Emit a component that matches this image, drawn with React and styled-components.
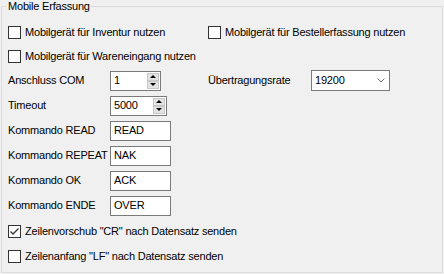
import styled, { createGlobalStyle } from "styled-components";

const GlobalStyle = createGlobalStyle`
  html, body {
    margin: 0;
    padding: 0;
    background: #f0f0f0;
  }
  body {
    width: 444px;
    height: 274px;
    overflow: hidden;
    font-family: "Liberation Sans", Arial, sans-serif;
    font-size: 11px;
    letter-spacing: -0.2px;
    color: #000;
  }
`;

const GroupBox = styled.fieldset`
  box-sizing: border-box;
  width: 442px;
  height: 273px;
  margin: 0 0 0 1px;
  padding: 7px 6px 0 6px;
  border: 1px solid #dcdcdc;
  min-inline-size: 0;
`;

const Legend = styled.legend`
  padding: 0 1px;
  margin-left: -1px;
  line-height: 13px;
  height: 13px;
`;

const Row = styled.div`
  display: flex;
  align-items: center;
  height: ${(p) => p.$h || 25}px;
  margin-top: ${(p) => p.$mt || 0}px;
`;

const Cell = styled.div`
  display: flex;
  align-items: center;
  width: ${(p) => (p.$w ? `${p.$w}px` : "auto")};
  flex: none;
`;

const Label = styled.span`
  width: ${(p) => p.$w || 102}px;
  flex: none;
  white-space: nowrap;
  line-height: 13px;
`;

const CheckWrap = styled.label`
  display: flex;
  align-items: center;
  gap: 4px;
  white-space: nowrap;
  line-height: 13px;
`;

const Box = styled.span`
  box-sizing: border-box;
  width: 13px;
  height: 13px;
  border: 1px solid #333;
  background: #fff;
  display: flex;
  align-items: center;
  justify-content: center;
  flex: none;
`;

const Input = styled.div`
  box-sizing: border-box;
  width: ${(p) => p.$w}px;
  height: 20px;
  border: 1px solid #7a7a7a;
  background: #fff;
  display: flex;
  align-items: center;
  padding-left: 3px;
  line-height: 13px;
`;

const InputText = styled.span`
  flex: 1;
`;

const Spinner = styled.div`
  display: flex;
  flex-direction: column;
  width: 12px;
  height: 16px;
  margin-right: 1px;
`;

const SpinButton = styled.div`
  flex: 1;
  background: #e3e3e3;
  border: 1px solid #c8c8c8;
  box-sizing: border-box;
  display: flex;
  align-items: center;
  justify-content: center;
`;

const Arrow = styled.span`
  width: 0;
  height: 0;
  border-left: 3px solid transparent;
  border-right: 3px solid transparent;
  ${(p) =>
    p.$down ? "border-top: 3px solid #000;" : "border-bottom: 3px solid #000;"}
`;

const Combo = styled.div`
  box-sizing: border-box;
  width: 79px;
  height: 21px;
  border: 1px solid #7a7a7a;
  background: #fff;
  display: flex;
  align-items: center;
  justify-content: space-between;
  padding: 0 4px 0 3px;
  margin-left: 2px;
  line-height: 13px;
`;

const Check = ({ checked, children }) => (
  <CheckWrap>
    <Box>
      {checked && (
        <svg width="11" height="11" viewBox="0 0 11 11">
          <path d="M1.5 5.5 L4 8 L9.5 2.5" fill="none" stroke="#333" strokeWidth="1.3" />
        </svg>
      )}
    </Box>
    {children}
  </CheckWrap>
);

const Spin = ({ w, value }) => (
  <Input $w={w}>
    <InputText>{value}</InputText>
    <Spinner>
      <SpinButton>
        <Arrow />
      </SpinButton>
      <SpinButton>
        <Arrow $down />
      </SpinButton>
    </Spinner>
  </Input>
);

const commands = [
  ["Kommando READ", "READ"],
  ["Kommando REPEAT", "NAK"],
  ["Kommando OK", "ACK"],
  ["Kommando ENDE", "OVER"],
];

export default function App() {
  return (
    <>
      <GlobalStyle />
      <GroupBox>
        <Legend>Mobile Erfassung</Legend>
        <Row $h={24}>
          <Cell $w={200}>
            <Check>Mobilgerät für Inventur nutzen</Check>
          </Cell>
          <Check>Mobilgerät für Bestellerfassung nutzen</Check>
        </Row>
        <Row $h={24}>
          <Check>Mobilgerät für Wareneingang nutzen</Check>
        </Row>
        <Row>
          <Cell $w={200}>
            <Label>Anschluss COM</Label>
            <Spin w={51} value="1" />
          </Cell>
          <Label $w={101}>Übertragungsrate</Label>
          <Combo>
            <span>19200</span>
            <svg width="8" height="5" viewBox="0 0 8 5">
              <path d="M0.5 0.5 L4 4 L7.5 0.5" fill="none" stroke="#707070" strokeWidth="1" />
            </svg>
          </Combo>
        </Row>
        <Row>
          <Label>Timeout</Label>
          <Spin w={57} value="5000" />
        </Row>
        {commands.map(([label, value]) => (
          <Row key={label}>
            <Label>{label}</Label>
            <Input $w={61}>
              <InputText>{value}</InputText>
            </Input>
          </Row>
        ))}
        <Row $mt={1}>
          <Check checked>Zeilenvorschub "CR" nach Datensatz senden</Check>
        </Row>
        <Row>
          <Check>Zeilenanfang "LF" nach Datensatz senden</Check>
        </Row>
      </GroupBox>
    </>
  );
}
